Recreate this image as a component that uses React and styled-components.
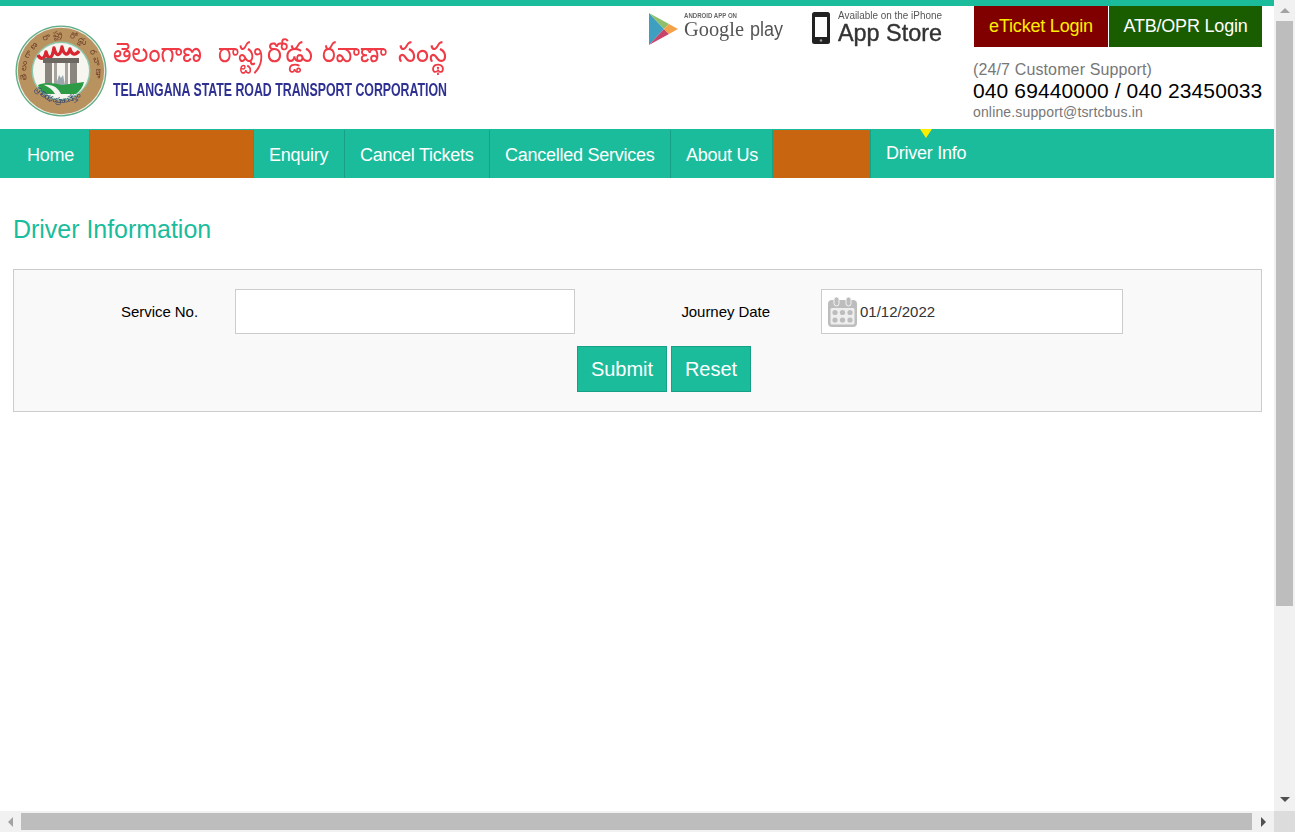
import React from 'react';
import styled, { createGlobalStyle } from 'styled-components';

const Global = createGlobalStyle`
  html, body { margin: 0; padding: 0; height: 100%; overflow: hidden; background: #fff; }
  body { font-family: "Liberation Sans", Arial, sans-serif; color: #000; }
  * { box-sizing: border-box; }
`;
const Frame = styled.div`display:grid;grid-template-columns:1fr 21px;grid-template-rows:1fr 21px;height:100vh;`;
const Page = styled.div`overflow:hidden;min-width:0;min-height:0;border-top:6px solid #1abc9c;`;
const Header = styled.header`height:123px;display:flex;align-items:flex-start;justify-content:space-between;padding-right:12px;`;
const LogoWrap = styled.a`display:block;margin:14px 0 0 12px;width:440px;height:100px;`;
const LogoSvg = styled.svg`display:block;filter:blur(.45px);`;
const HeaderRight = styled.div`display:flex;align-items:flex-start;`;
const Stores = styled.div`display:flex;margin:5px 30px 0 0;gap:28px;`;
const StoreSvg = styled.svg`display:block;filter:blur(.5px);`;
const Account = styled.div`display:flex;flex-direction:column;width:289px;`;
const Logins = styled.div`display:flex;gap:1px;margin-left:1px;`;
const LoginBtn = styled.a`height:41px;display:flex;align-items:center;justify-content:center;width:${p=>p.$w}px;font-size:18px;letter-spacing:-.2px;background:${p=>p.$bg};color:${p=>p.$fg};white-space:nowrap;`;
const SupportLabel = styled.div`margin-top:14px;font-size:16px;line-height:18px;letter-spacing:.13px;color:#777;`;
const Phone = styled.div`font-size:21px;line-height:24px;letter-spacing:.12px;white-space:nowrap;`;
const Email = styled.div`font-size:14px;line-height:16px;letter-spacing:.15px;color:#777;margin-top:1px;`;

const Nav = styled.nav`height:49px;background:#1abc9c;display:flex;padding-top:1px;`;
const NavItem = styled.a`
  position:relative;display:flex;align-items:flex-start;flex:none;width:${p=>p.$w}px;
  padding:${p=>p.$raised?13:15}px 0 0 ${p=>p.$first?27:15}px;
  font-size:18px;line-height:21px;letter-spacing:-.25px;color:#fff;white-space:nowrap;
  border-right:${p=>p.$plain?'none':'1px solid #16a085'};
`;
const NavBlank = styled.div`flex:none;width:${p=>p.$w}px;background:#c86511;border-right:1px solid #16a085;`;
const Pointer = styled.span`position:absolute;top:-1px;left:50%;margin-left:-6.5px;width:0;height:0;border-left:6.5px solid transparent;border-right:6.5px solid transparent;border-top:9px solid #ffed00;`;

const Main = styled.main`padding:0 12px 0 13px;`;
const Title = styled.h1`margin:37px 0 25px;font-size:25px;line-height:29px;font-weight:400;letter-spacing:-.03px;color:#1abc9c;`;
const Panel = styled.div`
  height:143px;background:#f9f9f9;border:1px solid #ccc;padding-top:19px;
  display:grid;grid-template-columns:221px 340px 246px 302px;grid-template-rows:45px 46px;row-gap:12px;align-content:start;
`;
const Label = styled.label`display:flex;align-items:center;justify-content:flex-end;padding-right:${p=>p.$pr}px;font-size:15px;letter-spacing:-.05px;`;
const Field = styled.div`display:flex;align-items:center;background:#fff;border:1px solid #ccc;padding-left:6px;gap:2px;font-size:15px;color:#333;`;
const Actions = styled.div`grid-column:3 / 5;grid-row:2;display:flex;gap:4px;margin-left:2px;`;
const Btn = styled.button`width:${p=>p.$w}px;height:46px;padding:0;background:#1abc9c;border:1px solid #16a085;color:#fff;font:20px "Liberation Sans",Arial,sans-serif;`;

const VBar = styled.div`background:#f1f1f1;display:flex;flex-direction:column;align-items:center;`;
const HBar = styled.div`background:#f1f1f1;display:flex;align-items:center;`;
const Corner = styled.div`background:#dcdcdc;`;
const ArrowBox = styled.div`width:${p=>p.$w}px;height:${p=>p.$h}px;flex:none;display:flex;align-items:center;justify-content:center;`;
const VThumb = styled.div`width:17px;height:585px;background:#bdbdbd;`;
const HThumb = styled.div`width:1231px;height:17px;background:#bdbdbd;`;
const Grow = styled.div`flex:1;`;
const ArrowUp = styled.span`border-left:5px solid transparent;border-right:5px solid transparent;border-bottom:5px solid #a3a3a3;`;
const ArrowDown = styled.span`border-left:5px solid transparent;border-right:5px solid transparent;border-top:5px solid #505050;`;
const ArrowLeft = styled.span`border-top:5px solid transparent;border-bottom:5px solid transparent;border-right:5px solid #a3a3a3;`;
const ArrowRight = styled.span`border-top:5px solid transparent;border-bottom:5px solid transparent;border-left:5px solid #505050;`;

const TE = "'Noto Sans Telugu','Noto Sans','Liberation Sans',sans-serif";
const teluguWords = [
  ['తెలంగాణ', 113, 89],
  ['రాష్ట్ర', 218, 45],
  ['రోడ్డు', 267, 46],
  ['రవాణా', 322, 65],
  ['సంస్థ', 398, 49],
];

const Logo = () => (
  <LogoSvg width="440" height="100" viewBox="12 20 440 100">
    <defs>
      <path id="ringTop" d="M27 80a35 35 0 1 1 68 0"/>
      <path id="ringBottom" d="M34 88a32 32 0 0 0 54 0"/>
    </defs>
    <circle cx="61" cy="71" r="45.5" fill="#5fae86"/>
    <circle cx="61" cy="71" r="44.2" fill="#f2efe8"/>
    <circle cx="61" cy="71" r="43.2" fill="#b8925f"/>
    <text fontFamily={TE} fontSize="8.4" fill="#6e3f2a" textLength="150"><textPath href="#ringTop">తెలంగాణ రాష్ట్ర రోడ్డు రవాణా సంస్థ</textPath></text>
    <circle cx="61" cy="71" r="29.5" fill="#8ec7ad"/>
    <circle cx="61" cy="71" r="28" fill="#f6f5f0"/>
    <path d="M38 55c2 4 6 6 8-3 2 8 6 8 8-4 2 9 6 9 8-1 2 9 6 9 8 2 2 7 6 6 9 2" fill="none" stroke="#d92732" strokeWidth="3.4" strokeLinejoin="round"/>
    <rect x="43" y="58" width="36" height="5" fill="#6d6762"/>
    <rect x="45" y="63" width="7" height="22" fill="#8b8580"/>
    <rect x="70" y="63" width="7" height="22" fill="#8b8580"/>
    <rect x="54" y="63" width="3" height="22" fill="#a7a29d"/>
    <rect x="65" y="63" width="3" height="22" fill="#a7a29d"/>
    <path d="M56 85l3-10 2 3 2-3 2 10z" fill="#9aa7ac"/>
    <path d="M38 85c8-3 15-2 24 0 7-1 15-2 22-3-1 5-4 9-8 12H46c-4-2-7-5-8-9z" fill="#2d9a46"/>
    <path d="M44 85c9-1 14 3 17 9h-6c-2-4-6-7-11-9z" fill="#f4f4f0"/>
    <path d="M30 86a34 34 0 0 0 62 0l-7 1a27 27 0 0 1-48 0z" fill="#b8925f"/>
    <text fontFamily={TE} fontSize="8" fill="#3a4a70" textLength="52"><textPath href="#ringBottom">ప్రగతి రథం ప్రజల నేస్తం</textPath></text>
    {teluguWords.map(([word, x, len]) => (
      <text key={word} x={x} y="62" fontFamily={TE} fontSize="28" fill="#ee3b46" textLength={len} lengthAdjust="spacingAndGlyphs">{word}</text>
    ))}
    <text x="113" y="96" fontFamily="'Liberation Sans',sans-serif" fontWeight="700" fontSize="19" fill="#2e3192" textLength="334" lengthAdjust="spacingAndGlyphs">TELANGANA STATE ROAD TRANSPORT CORPORATION</text>
  </LogoSvg>
);

const GooglePlay = () => (
  <StoreSvg width="136" height="36" viewBox="648 11 136 36">
    <path d="M649 13l15 16-15 16z" fill="#3f9fc0"/>
    <path d="M649 13l20 11-5 5z" fill="#8fbf6a"/>
    <path d="M649 45l20-11-5-5z" fill="#c8446a"/>
    <path d="M669 24l9 5-9 5-5-5z" fill="#f1a24a"/>
    <text x="684" y="17.5" fontFamily="'Liberation Sans',sans-serif" fontWeight="700" fontSize="6.5" fill="#666" textLength="53" lengthAdjust="spacingAndGlyphs">ANDROID APP ON</text>
    <text x="684" y="35.5" fontFamily="'Liberation Serif',serif" fontSize="21" fill="#555" textLength="60" lengthAdjust="spacingAndGlyphs">Google</text>
    <text x="750" y="35.5" fontFamily="'Liberation Sans',sans-serif" fontSize="20" fill="#555" textLength="33" lengthAdjust="spacingAndGlyphs">play</text>
  </StoreSvg>
);

const AppStore = () => (
  <StoreSvg width="131" height="36" viewBox="812 11 131 36">
    <rect x="812" y="12" width="18" height="32" rx="2.5" fill="#222"/>
    <rect x="815" y="17" width="12" height="20" fill="#fff"/>
    <circle cx="821" cy="40.5" r="1.3" fill="#999"/>
    <text x="838" y="18.5" fontFamily="'Liberation Sans',sans-serif" fontSize="10" fill="#555" textLength="104" lengthAdjust="spacingAndGlyphs">Available on the iPhone</text>
    <text x="838" y="41" fontFamily="'Liberation Sans',sans-serif" fontSize="24" stroke="#333" strokeWidth=".4" fill="#333" textLength="104" lengthAdjust="spacingAndGlyphs">App Store</text>
  </StoreSvg>
);

const Calendar = () => (
  <svg width="30" height="30" viewBox="0 0 30 30">
    <rect x="0" y="3" width="29" height="27" rx="4" fill="#bdbdbd"/>
    <rect x="6" y="0" width="5" height="9" rx="2.5" fill="#bdbdbd" stroke="#f4f4f4" strokeWidth="1"/>
    <rect x="18" y="0" width="5" height="9" rx="2.5" fill="#bdbdbd" stroke="#f4f4f4" strokeWidth="1"/>
    <rect x="2.5" y="11" width="24" height="16.5" rx="1.5" fill="#eee"/>
    {[7, 14.5, 22].map(x => [15.5, 23].map(y => <circle key={`${x}-${y}`} cx={x} cy={y} r="2.6" fill="#bdbdbd"/>))}
  </svg>
);

export default function App() {
  return (
    <>
      <Global/>
      <Frame>
        <Page>
          <Header>
            <LogoWrap><Logo/></LogoWrap>
            <HeaderRight>
              <Stores><GooglePlay/><AppStore/></Stores>
              <Account>
                <Logins>
                  <LoginBtn $w={134} $bg="#800000" $fg="#ffed00">eTicket Login</LoginBtn>
                  <LoginBtn $w={153} $bg="#1a5c00" $fg="#fff">ATB/OPR Login</LoginBtn>
                </Logins>
                <SupportLabel>(24/7 Customer Support)</SupportLabel>
                <Phone>040 69440000 / 040 23450033</Phone>
                <Email>online.support@tsrtcbus.in</Email>
              </Account>
            </HeaderRight>
          </Header>
          <Nav>
            <NavItem $first $w={90}>Home</NavItem>
            <NavBlank $w={164}/>
            <NavItem $w={91}>Enquiry</NavItem>
            <NavItem $w={145}>Cancel Tickets</NavItem>
            <NavItem $w={181}>Cancelled Services</NavItem>
            <NavItem $w={102}>About Us</NavItem>
            <NavBlank $w={98}/>
            <NavItem $raised $plain $w={111}><Pointer/>Driver Info</NavItem>
          </Nav>
          <Main>
            <Title>Driver Information</Title>
            <Panel>
              <Label $pr={37}>Service No.</Label>
              <Field/>
              <Label $pr={51}>Journey Date</Label>
              <Field><Calendar/>01/12/2022</Field>
              <Actions><Btn $w={90}>Submit</Btn><Btn $w={80}>Reset</Btn></Actions>
            </Panel>
          </Main>
        </Page>
        <VBar>
          <ArrowBox $w={21} $h={21}><ArrowUp/></ArrowBox>
          <VThumb/>
          <Grow/>
          <ArrowBox $w={21} $h={23}><ArrowDown/></ArrowBox>
        </VBar>
        <HBar>
          <ArrowBox $w={21} $h={17}><ArrowLeft/></ArrowBox>
          <HThumb/>
          <Grow/>
          <ArrowBox $w={21} $h={17}><ArrowRight/></ArrowBox>
        </HBar>
        <Corner/>
      </Frame>
    </>
  );
}
